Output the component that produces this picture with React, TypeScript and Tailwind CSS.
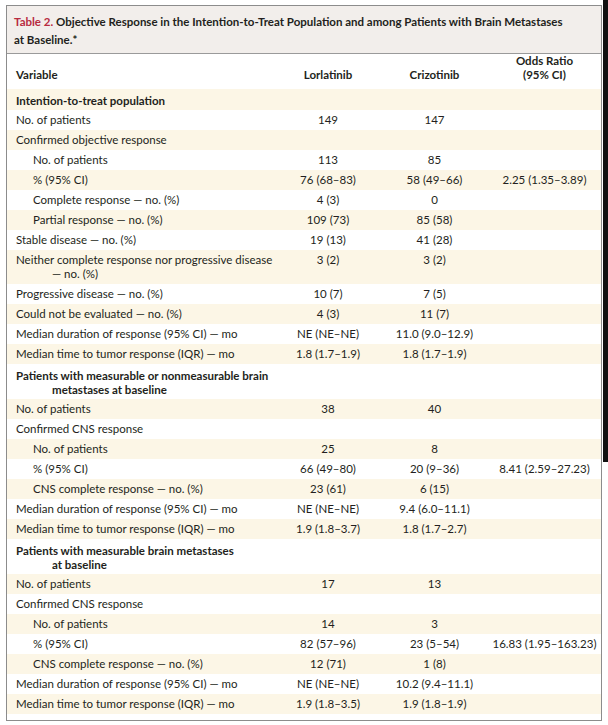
import React from 'react';

type Row = {
  label: string;
  cont?: string;
  l?: string;
  c?: string;
  o?: string;
  indent?: boolean;
  section?: boolean;
};

const rows: Row[] = [
  { label: 'Intention-to-treat population', section: true },
  { label: 'No. of patients', l: '149', c: '147' },
  { label: 'Confirmed objective response' },
  { label: 'No. of patients', l: '113', c: '85', indent: true },
  { label: '% (95% CI)', l: '76 (68–83)', c: '58 (49–66)', o: '2.25 (1.35–3.89)', indent: true },
  { label: 'Complete response — no. (%)', l: '4 (3)', c: '0', indent: true },
  { label: 'Partial response — no. (%)', l: '109 (73)', c: '85 (58)', indent: true },
  { label: 'Stable disease — no. (%)', l: '19 (13)', c: '41 (28)' },
  { label: 'Neither complete response nor progressive disease', cont: '— no. (%)', l: '3 (2)', c: '3 (2)' },
  { label: 'Progressive disease — no. (%)', l: '10 (7)', c: '7 (5)' },
  { label: 'Could not be evaluated — no. (%)', l: '4 (3)', c: '11 (7)' },
  { label: 'Median duration of response (95% CI) — mo', l: 'NE (NE–NE)', c: '11.0 (9.0–12.9)' },
  { label: 'Median time to tumor response (IQR) — mo', l: '1.8 (1.7–1.9)', c: '1.8 (1.7–1.9)' },
  { label: 'Patients with measurable or nonmeasurable brain', cont: 'metastases at baseline', section: true },
  { label: 'No. of patients', l: '38', c: '40' },
  { label: 'Confirmed CNS response' },
  { label: 'No. of patients', l: '25', c: '8', indent: true },
  { label: '% (95% CI)', l: '66 (49–80)', c: '20 (9–36)', o: '8.41 (2.59–27.23)', indent: true },
  { label: 'CNS complete response — no. (%)', l: '23 (61)', c: '6 (15)', indent: true },
  { label: 'Median duration of response (95% CI) — mo', l: 'NE (NE–NE)', c: '9.4 (6.0–11.1)' },
  { label: 'Median time to tumor response (IQR) — mo', l: '1.9 (1.8–3.7)', c: '1.8 (1.7–2.7)' },
  { label: 'Patients with measurable brain metastases', cont: 'at baseline', section: true },
  { label: 'No. of patients', l: '17', c: '13' },
  { label: 'Confirmed CNS response' },
  { label: 'No. of patients', l: '14', c: '3', indent: true },
  { label: '% (95% CI)', l: '82 (57–96)', c: '23 (5–54)', o: '16.83 (1.95–163.23)', indent: true },
  { label: 'CNS complete response — no. (%)', l: '12 (71)', c: '1 (8)', indent: true },
  { label: 'Median duration of response (95% CI) — mo', l: 'NE (NE–NE)', c: '10.2 (9.4–11.1)' },
  { label: 'Median time to tumor response (IQR) — mo', l: '1.9 (1.8–3.5)', c: '1.9 (1.8–1.9)' },
];

export default function App() {
  return (
    <div
      className="w-[608px] h-[725px] bg-white flex text-[#231f20]"
      style={{ fontFamily: 'Lato, "Open Sans", sans-serif' }}
    >
      <div className="w-[6px] shrink-0" />
      <div className="flex flex-col w-[596px] shrink-0">
        <div className="h-[5px] shrink-0" />
        <div className="border border-[#8c8c8c] bg-white">
          <div className="bg-[#f2eeeb] border-b border-[#9a9a9a] px-[7px] pt-[7px] pb-[4px] text-[11.5px] leading-[18px] font-bold">
            <span className="text-[#b82b40]">Table 2.</span> Objective Response in the Intention-to-Treat Population and among Patients with Brain Metastases
            <br />
            at Baseline.*
          </div>
          <table className="w-full table-fixed border-collapse text-[11.5px] leading-[14px]">
            <colgroup>
              <col className="w-[268px]" />
              <col className="w-[106px]" />
              <col className="w-[107px]" />
              <col />
            </colgroup>
            <thead>
              <tr className="font-bold">
                <th className="text-left align-bottom pl-[9px] pb-[7px] pt-[6px]">Variable</th>
                <th className="text-center align-bottom pb-[7px]">Lorlatinib</th>
                <th className="text-center align-bottom pb-[7px]">Crizotinib</th>
                <th className="text-center align-bottom pb-[7px]">
                  Odds Ratio
                  <br />
                  (95% CI)
                </th>
              </tr>
            </thead>
            <tbody>
              {rows.map((r, i) => (
                <tr key={i} className={i % 2 === 0 ? 'bg-[#fcf6e6]' : 'bg-white'}>
                  <td
                    className={
                      (r.indent ? 'pl-[26px] ' : 'pl-[9px] ') +
                      (r.section ? 'font-bold pt-[5px] pb-[2px] ' : 'py-[3px] ') +
                      'align-top text-left'
                    }
                  >
                    <div>{r.label}</div>
                    {r.cont && <div className="pl-[36px]">{r.cont}</div>}
                  </td>
                  <td className="align-top text-center py-[3px]">{r.l}</td>
                  <td className="align-top text-center py-[3px]">{r.c}</td>
                  <td className="align-top text-center py-[3px]">{r.o}</td>
                </tr>
              ))}
              <tr>
                <td colSpan={4} className="h-[6px]" />
              </tr>
            </tbody>
          </table>
        </div>
      </div>
      <div className="w-[1px] shrink-0" />
      <div className="flex-1 flex flex-col">
        <div className="h-[462px] bg-[#111111]" />
      </div>
    </div>
  );
}
